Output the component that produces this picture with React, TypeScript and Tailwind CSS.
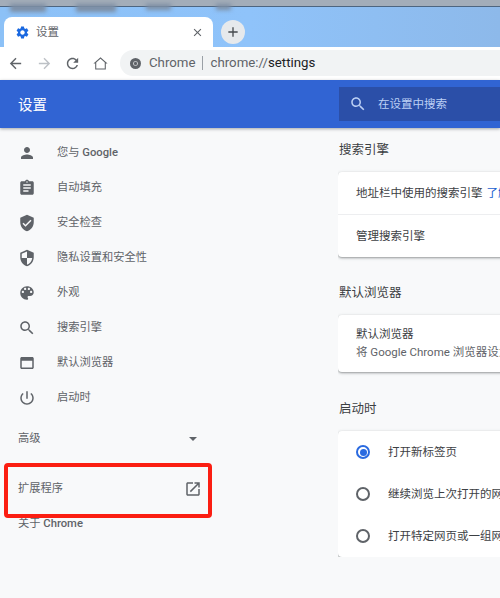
import type { ReactNode } from "react";

const font = { fontFamily: 'Roboto, "Noto Sans CJK SC", sans-serif' };

const paths = {
  person: "M12 12c2.21 0 4-1.79 4-4s-1.79-4-4-4-4 1.79-4 4 1.79 4 4 4zm0 2c-2.67 0-8 1.34-8 4v2h16v-2c0-2.66-5.33-4-8-4z",
  assignment: "M19 3h-4.18C14.4 1.84 13.3 1 12 1c-1.3 0-2.4.84-2.82 2H5c-1.1 0-2 .9-2 2v14c0 1.1.9 2 2 2h14c1.1 0 2-.9 2-2V5c0-1.1-.9-2-2-2zm-7 0c.55 0 1 .45 1 1s-.45 1-1 1-1-.45-1-1 .45-1 1-1zm2 14H7v-2h7v2zm3-4H7v-2h10v2zm0-4H7V7h10v2z",
  verified: "M12 1L3 5v6c0 5.55 3.84 10.74 9 12 5.16-1.26 9-6.45 9-12V5l-9-4zm-2 16l-4-4 1.41-1.41L10 14.17l6.59-6.59L18 9l-8 8z",
  security: "M12 1L3 5v6c0 5.55 3.84 10.74 9 12 5.16-1.26 9-6.45 9-12V5l-9-4zm0 10.99h7c-.53 4.12-3.28 7.79-7 8.94V12H5V6.3l7-3.11v8.8z",
  palette: "M12 3c-4.97 0-9 4.03-9 9s4.03 9 9 9c.83 0 1.5-.67 1.5-1.5 0-.39-.15-.74-.39-1.01-.23-.26-.38-.61-.38-.99 0-.83.67-1.5 1.5-1.5H16c2.76 0 5-2.24 5-5 0-4.42-4.03-8-9-8zm-5.5 9c-.83 0-1.5-.67-1.5-1.5S5.67 9 6.5 9 8 9.67 8 10.5 7.33 12 6.5 12zm3-4C8.67 8 8 7.33 8 6.5S8.67 5 9.5 5s1.5.67 1.5 1.5S10.33 8 9.5 8zm5 0c-.83 0-1.5-.67-1.5-1.5S13.67 5 14.5 5s1.5.67 1.5 1.5S15.33 8 14.5 8zm3 4c-.83 0-1.5-.67-1.5-1.5S16.67 9 17.5 9s1.5.67 1.5 1.5-.67 1.5-1.5 1.5z",
  search: "M15.5 14h-.79l-.28-.27C15.41 12.59 16 11.11 16 9.5 16 5.91 13.09 3 9.5 3S3 5.91 3 9.5 5.91 16 9.5 16c1.61 0 3.09-.59 4.23-1.57l.27.28v.79l5 4.99L20.49 19l-4.99-5zm-6 0C7.01 14 5 11.99 5 9.5S7.01 5 9.5 5 14 7.01 14 9.5 11.99 14 9.5 14z",
  web: "M19 4H5c-1.11 0-2 .9-2 2v12c0 1.1.89 2 2 2h14c1.1 0 2-.9 2-2V6c0-1.1-.89-2-2-2zm0 14H5V9h14v9z",
  power: "M13 3h-2v10h2V3zm4.83 2.17l-1.42 1.42C17.99 7.86 19 9.81 19 12c0 3.87-3.13 7-7 7s-7-3.13-7-7c0-2.19 1.01-4.14 2.58-5.42L6.17 5.17C4.23 6.82 3 9.26 3 12c0 4.97 4.03 9 9 9s9-4.03 9-9c0-2.74-1.23-5.18-3.17-6.83z",
  open: "M19 19H5V5h7V3H5c-1.11 0-2 .9-2 2v14c0 1.1.89 2 2 2h14c1.1 0 2-.9 2-2v-7h-2v7zM14 3v2h3.59l-9.83 9.83 1.41 1.41L19 6.41V10h2V3h-7z",
  gear: "M19.14 12.94c.04-.3.06-.61.06-.94 0-.32-.02-.64-.07-.94l2.03-1.58a.49.49 0 0 0 .12-.61l-1.92-3.32a.488.488 0 0 0-.59-.22l-2.39.96c-.5-.38-1.03-.7-1.62-.94l-.36-2.54a.484.484 0 0 0-.48-.41h-3.84c-.24 0-.43.17-.47.41l-.36 2.54c-.59.24-1.13.57-1.62.94l-2.39-.96c-.22-.08-.47 0-.59.22L2.74 8.87c-.12.21-.08.47.12.61l2.03 1.58c-.05.3-.09.63-.09.94s.02.64.07.94l-2.03 1.58a.49.49 0 0 0-.12.61l1.92 3.32c.12.22.37.29.59.22l2.39-.96c.5.38 1.03.7 1.62.94l.36 2.54c.05.24.24.41.48.41h3.84c.24 0 .44-.17.47-.41l.36-2.54c.59-.24 1.13-.56 1.62-.94l2.39.96c.22.08.47 0 .59-.22l1.92-3.32c.12-.22.07-.47-.12-.61l-2.01-1.58zM12 15.6c-1.98 0-3.6-1.62-3.6-3.6s1.62-3.6 3.6-3.6 3.6 1.62 3.6 3.6-1.62 3.6-3.6 3.6z",
  back: "M20 11H7.83l5.59-5.59L12 4l-8 8 8 8 1.41-1.41L7.83 13H20v-2z",
  forward: "M12 4l-1.41 1.41L16.17 11H4v2h12.17l-5.58 5.59L12 20l8-8z",
  refresh: "M17.65 6.35C16.2 4.9 14.21 4 12 4c-4.42 0-7.99 3.58-7.99 8s3.57 8 7.99 8c3.73 0 6.84-2.55 7.73-6h-2.08c-.82 2.33-3.04 4-5.65 4-3.31 0-6-2.69-6-6s2.69-6 6-6c1.66 0 3.14.69 4.22 1.78L13 11h7V4l-2.35 2.35z",
  close: "M19 6.41L17.59 5 12 10.59 6.41 5 5 6.41 10.59 12 5 17.59 6.41 19 12 13.41 17.59 19 19 17.59 13.41 12z",
  plus: "M19 13h-6v6h-2v-6H5v-2h6V5h2v6h6v2z",
  home: "M12 5.2l6 5.4V19H6v-8.4l6-5.4M12 3L2 12h2.5v8.5h15V12H22L12 3z",
};

function Icon({ d, className }: { d: string; className?: string }) {
  return (
    <svg viewBox="0 0 24 24" fill="currentColor" className={className}>
      <path d={d} />
    </svg>
  );
}

const navItems: { icon: string; label: ReactNode }[] = [
  { icon: paths.person, label: <>您与 <span className="font-medium">Google</span></> },
  { icon: paths.assignment, label: "自动填充" },
  { icon: paths.verified, label: "安全检查" },
  { icon: paths.security, label: "隐私设置和安全性" },
  { icon: paths.palette, label: "外观" },
  { icon: paths.search, label: "搜索引擎" },
  { icon: paths.web, label: "默认浏览器" },
  { icon: paths.power, label: "启动时" },
];

const radios = ["打开新标签页", "继续浏览上次打开的网页", "打开特定网页或一组网页"];

function Heading({ children, className }: { children: string; className?: string }) {
  return (
    <h2 className={`h-5 pl-px pt-px text-[12.5px] leading-5 text-[#3c4043] ${className}`}>{children}</h2>
  );
}

function Sidebar() {
  return (
    <aside className="w-[338px] shrink-0 pt-[7px] text-[11.25px] text-[#5f6368]">
      {navItems.map((item) => (
        <div key={item.icon} className="flex h-[35px] items-center pl-[18px]">
          <Icon d={item.icon} className="h-[18px] w-[18px] text-[#5f6368]" />
          <span className="ml-[21px] pt-[2px]">{item.label}</span>
        </div>
      ))}
      <div className="mt-[6px] flex h-[35px] w-[210px] items-center justify-between pl-[18px] pr-[13px]">
        <span className="pt-px">高级</span>
        <span className="h-0 w-0 border-x-[4px] border-t-[4px] border-x-transparent border-t-[#5f6368]" />
      </div>
      <div className="mt-[15px] flex h-[35px] w-[210px] items-center justify-between pl-[18px] pr-[8px]">
        <span className="pt-[2px]">扩展程序</span>
        <Icon d={paths.open} className="h-[18px] w-[18px] text-[#5f6368]" />
      </div>
      <div className="flex h-[35px] items-center pl-[18px]">
        <span className="pt-px">关于 <span className="font-medium">Chrome</span></span>
      </div>
    </aside>
  );
}

function Content() {
  const card = "mt-[13px] w-[400px] rounded-[4px] bg-white shadow-[0_1px_2px_rgba(60,64,67,0.4),0_1px_3px_1px_rgba(60,64,67,0.12)]";
  return (
    <main className="flex-1 overflow-hidden whitespace-nowrap pt-[11px] text-[11.5px] text-[#3c4043]">
      <Heading>搜索引擎</Heading>
      <section className={card}>
        <div className="flex h-[43px] items-center border-b border-[#edeef0] pl-[18px] pt-[2px]">
          地址栏中使用的搜索引擎
          <span className="ml-1 text-[#1a5fd0]">了解详情</span>
        </div>
        <div className="flex h-[42px] items-center pl-[18px] pt-[2px]">管理搜索引擎</div>
      </section>
      <Heading className="mt-[25px]">默认浏览器</Heading>
      <section className={`${card} h-[57px] pl-[18px] pt-[10px] leading-[18px]`}>
        <div>默认浏览器</div>
        <div className="text-[#5f6368]">将 Google Chrome 浏览器设为默认浏览器</div>
      </section>
      <Heading className="mt-[26px]">启动时</Heading>
      <section className={card}>
        {radios.map((label, i) => (
          <div key={label} className="flex h-[42px] items-center pl-[18px]">
            {i === 0 ? (
              <span className="flex h-[14px] w-[14px] items-center justify-center rounded-full border-2 border-[#2a6ae0]">
                <span className="h-[7px] w-[7px] rounded-full bg-[#2a6ae0]" />
              </span>
            ) : (
              <span className="h-[14px] w-[14px] rounded-full border-2 border-[#5f6368]" />
            )}
            <span className="ml-[18px] pt-[1px]">{label}</span>
          </div>
        ))}
      </section>
    </main>
  );
}

export default function App() {
  return (
    <div style={font} className="relative h-[598px] w-[500px] overflow-hidden bg-[#f8f9fa]">
      {/* blurred window behind the browser */}
      <div className="h-[7px] border-b border-[#4d6580] bg-[#a3adb9]" />
      <div className="relative h-[40px] bg-gradient-to-r from-[#8cc1f7] via-[#8fc3fa] to-[#8db9ea]">
        <div className="absolute left-0 top-[-3px] flex gap-[30px]">
          <span className="ml-[10px] h-[8px] w-[36px] bg-[#7d8ea3] blur-[2px]" />
          <span className="h-[8px] w-[40px] bg-[#7d8ea3] blur-[2px]" />
          <span className="h-[6px] w-[25px] bg-[#7d8ea3] blur-[2px]" />
          <span className="ml-[15px] h-[6px] w-[15px] bg-[#7d8ea3] blur-[2px]" />
        </div>
        <div className="flex h-full items-end pl-[4px]">
          <div className="flex h-[30px] w-[209px] items-center rounded-t-[8px] bg-white pl-[11px] pr-[9px]">
            <Icon d={paths.gear} className="h-[15px] w-[15px] text-[#1a68e0]" />
            <span className="ml-[6px] flex-1 pt-px text-[11.5px] text-[#5f6368]">设置</span>
            <Icon d={paths.close} className="h-[13px] w-[13px] text-[#5f6368]" />
          </div>
          <div className="mb-[3px] ml-[8px] flex h-[24px] w-[24px] items-center justify-center rounded-full bg-[#e6e9ec]">
            <Icon d={paths.plus} className="h-[16px] w-[16px] text-[#45494d]" />
          </div>
        </div>
      </div>
      <div className="flex h-[33px] items-center bg-white pb-[1px] pl-[7px]">
        <Icon d={paths.back} className="h-[17px] w-[17px] text-[#5f6368]" />
        <Icon d={paths.forward} className="ml-[12px] h-[17px] w-[17px] text-[#bdc1c6]" />
        <Icon d={paths.refresh} className="ml-[11px] h-[17px] w-[17px] text-[#5f6368]" />
        <Icon d={paths.home} className="ml-[11px] h-[17px] w-[17px] text-[#5f6368]" />
        <div className="ml-[11px] flex h-[26px] flex-1 items-center whitespace-nowrap rounded-l-full bg-[#f1f3f4] pl-[10px] text-[13.25px] text-[#5f6368]">
          <svg viewBox="0 0 16 16" className="h-[11px] w-[11px] shrink-0">
            <circle cx="8" cy="8" r="8" fill="#5f6368" />
            <circle cx="8" cy="8" r="3.4" fill="#f1f3f4" />
            <circle cx="8" cy="8" r="2.4" fill="#5f6368" />
          </svg>
          <span className="ml-[8px]">Chrome</span>
          <span className="ml-[6px] h-[14px] w-px bg-[#9aa0a6]" />
          <span className="ml-[8px]">
            chrome://<span className="text-[#202124]">settings</span>
          </span>
        </div>
      </div>
      <header className="relative z-10 flex h-[48px] items-center bg-[#3164d3] shadow-[0_1px_3px_rgba(60,64,67,0.45)]">
        <div className="w-[339px] shrink-0 pl-[18px] pt-[3px] text-[14.5px] text-white">设置</div>
        <div className="flex h-[34px] flex-1 items-center bg-[#2b4fa8] pl-[10px] text-[11.5px] text-[#bcd0f5]">
          <Icon d={paths.search} className="h-[18px] w-[18px] text-[#bcd0f5]" />
          <span className="ml-[11px] pt-px">在设置中搜索</span>
        </div>
      </header>
      <div className="flex">
        <Sidebar />
        <Content />
      </div>
      {/* red annotation around the extensions row */}
      <div className="absolute left-[4px] top-[463px] h-[55px] w-[208px] rounded-[4px] border-[4px] border-[#fb1e12]" />
    </div>
  );
}
